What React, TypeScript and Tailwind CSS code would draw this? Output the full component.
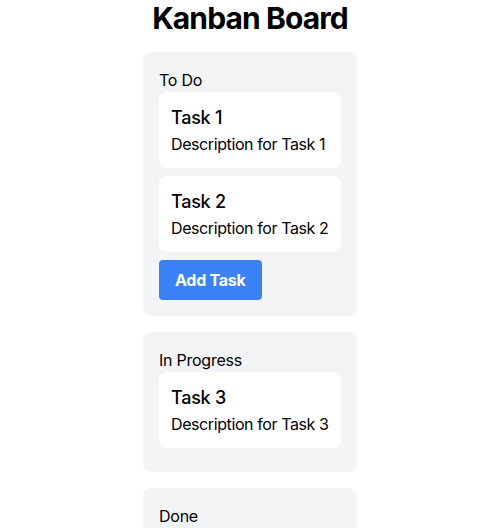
import React from "react";

const columns = [
  { title: "To Do", tasks: [{ t: "Task 1", d: "Description for Task 1" }, { t: "Task 2", d: "Description for Task 2" }], add: true },
  { title: "In Progress", tasks: [{ t: "Task 3", d: "Description for Task 3" }], add: false },
  { title: "Done", tasks: [], add: false },
];

export default function App() {
  return (
    <div className="flex flex-col items-center bg-white text-black" style={{ fontFamily: "Inter, 'Noto Sans', sans-serif" }}>
      <h1 className="text-3xl font-bold mb-4 tracking-[-0.03em]">Kanban Board</h1>
      <div className="flex flex-col gap-4">
        {columns.map((c) => (
          <div key={c.title} className="w-[214px] bg-[#f3f4f6] rounded-lg p-4 tracking-[-0.25px]">
            <h2 className="text-base whitespace-nowrap">{c.title}</h2>
            {c.tasks.map((k) => (
              <div key={k.t} className="bg-white rounded-lg p-3 mb-2">
                <h3 className="text-lg font-medium whitespace-nowrap">{k.t}</h3>
                <p className="text-base whitespace-nowrap tracking-[-0.4px]">{k.d}</p>
              </div>
            ))}
            {c.add && (
              <button className="bg-[#3b82f6] text-white font-bold px-4 py-2 rounded whitespace-nowrap">Add Task</button>
            )}
          </div>
        ))}
      </div>
    </div>
  );
}
